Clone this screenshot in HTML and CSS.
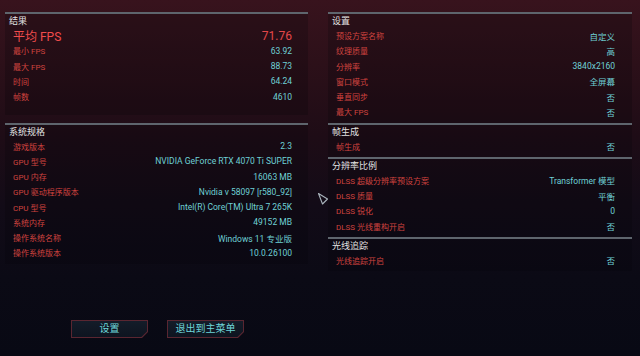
FILE: index.html
```html
<!DOCTYPE html>
<html lang="zh-CN">
<head>
<meta charset="utf-8">
<title>基准测试结果</title>
<link rel="stylesheet" href="styles.css">
</head>
<body>
<div class="screen">
  <div class="grid">
    <div class="col">
      <section class="section section-results">
        <div class="sec-title">结果</div>
        <div class="row row-big"><span class="label">平均 FPS</span><span class="value">71.76</span></div>
        <div class="row"><span class="label">最小 FPS</span><span class="value">63.92</span></div>
        <div class="row"><span class="label">最大 FPS</span><span class="value">88.73</span></div>
        <div class="row"><span class="label">时间</span><span class="value">64.24</span></div>
        <div class="row"><span class="label">帧数</span><span class="value">4610</span></div>
      </section>
      <section class="section">
        <div class="sec-title">系统规格</div>
        <div class="row"><span class="label">游戏版本</span><span class="value">2.3</span></div>
        <div class="row"><span class="label">GPU 型号</span><span class="value">NVIDIA GeForce RTX 4070 Ti SUPER</span></div>
        <div class="row"><span class="label">GPU 内存</span><span class="value">16063 MB</span></div>
        <div class="row"><span class="label">GPU 驱动程序版本</span><span class="value">Nvidia v 58097 [r580_92]</span></div>
        <div class="row"><span class="label">CPU 型号</span><span class="value">Intel(R) Core(TM) Ultra 7 265K</span></div>
        <div class="row"><span class="label">系统内存</span><span class="value">49152 MB</span></div>
        <div class="row"><span class="label">操作系统名称</span><span class="value">Windows 11 专业版</span></div>
        <div class="row"><span class="label">操作系统版本</span><span class="value">10.0.26100</span></div>
      </section>
    </div>
    <div class="col col-right">
      <section class="section">
        <div class="sec-title">设置</div>
        <div class="row"><span class="label">预设方案名称</span><span class="value">自定义</span></div>
        <div class="row"><span class="label">纹理质量</span><span class="value">高</span></div>
        <div class="row"><span class="label">分辨率</span><span class="value">3840x2160</span></div>
        <div class="row"><span class="label">窗口模式</span><span class="value">全屏幕</span></div>
        <div class="row"><span class="label">垂直同步</span><span class="value">否</span></div>
        <div class="row"><span class="label">最大 FPS</span><span class="value">否</span></div>
      </section>
      <section class="section">
        <div class="sec-title">帧生成</div>
        <div class="row"><span class="label">帧生成</span><span class="value">否</span></div>
      </section>
      <section class="section">
        <div class="sec-title">分辨率比例</div>
        <div class="row"><span class="label">DLSS 超级分辨率预设方案</span><span class="value">Transformer 模型</span></div>
        <div class="row"><span class="label">DLSS 质量</span><span class="value">平衡</span></div>
        <div class="row"><span class="label">DLSS 锐化</span><span class="value">0</span></div>
        <div class="row"><span class="label">DLSS 光线重构开启</span><span class="value">否</span></div>
      </section>
      <section class="section">
        <div class="sec-title">光线追踪</div>
        <div class="row"><span class="label">光线追踪开启</span><span class="value">否</span></div>
      </section>
    </div>
  </div>
  <div class="actions">
    <div class="btn"><div class="btn-inner">设置</div></div>
    <div class="btn"><div class="btn-inner">退出到主菜单</div></div>
  </div>
  <svg class="cursor" width="12" height="14" viewBox="0 0 12 14">
    <polygon points="1.5,1.5 10.5,7 5.5,12" fill="none" stroke="#a9b4bc" stroke-width="1.1" stroke-linejoin="round"/>
  </svg>
</div>
</body>
</html>
```
FILE: styles.css
```css
html, body {
  margin: 0;
  padding: 0;
}
body {
  width: 640px;
  height: 356px;
  overflow: hidden;
  background: linear-gradient(180deg, #38131d 0%, #2c1019 18%, #1e0c16 38%, #120b17 58%, #0b0a15 78%, #080914 100%);
  font-family: "Roboto", "Noto Sans CJK SC", sans-serif;
}
.screen {
  position: relative;
  width: 640px;
  height: 356px;
  box-sizing: border-box;
  padding: 12px 8px 0 5px;
}
.grid {
  display: grid;
  grid-template-columns: 303px 304px;
  column-gap: 20px;
  align-items: start;
}
.section {
  border-top: 2px solid #5e656d;
  background: rgba(4, 4, 10, 0.22);
  padding-bottom: 3px;
}
.section-results {
  padding-bottom: 10.5px;
  margin-bottom: 7.75px;
}
.sec-title {
  height: 14px;
  line-height: 14px;
  padding-left: 4px;
  font-size: 9px;
  color: #e2e2e2;
  white-space: nowrap;
}
.row {
  height: 15.25px;
  display: flex;
  align-items: center;
  justify-content: space-between;
  padding: 0 16px 0 8px;
  font-size: 8px;
  white-space: nowrap;
}
.col-right .row {
  padding-right: 17px;
}
.label {
  color: #d0433f;
}
.value {
  color: #6fd0d5;
  font-size: 8.5px;
}
.row-big {
  font-size: 12px;
}
.row-big .label {
  color: #f04c4c;
}
.row-big .value {
  color: #e4484a;
  font-size: 12px;
}
.actions {
  display: flex;
  gap: 19px;
  margin-top: 49px;
  padding-left: 66px;
}
.btn {
  width: 77px;
  height: 18px;
  box-sizing: border-box;
  padding: 1px;
  background: #5a2631;
  clip-path: polygon(0 0, 100% 0, 100% calc(100% - 6px), calc(100% - 6px) 100%, 0 100%);
}
.btn-inner {
  height: 16px;
  line-height: 16px;
  text-align: center;
  font-size: 10px;
  color: #6ed6da;
  background: linear-gradient(180deg, #141c29 0%, #0e1420 100%);
  clip-path: polygon(0 0, 100% 0, 100% calc(100% - 5.6px), calc(100% - 5.6px) 100%, 0 100%);
}
.cursor {
  position: absolute;
  left: 317px;
  top: 192px;
}
```
